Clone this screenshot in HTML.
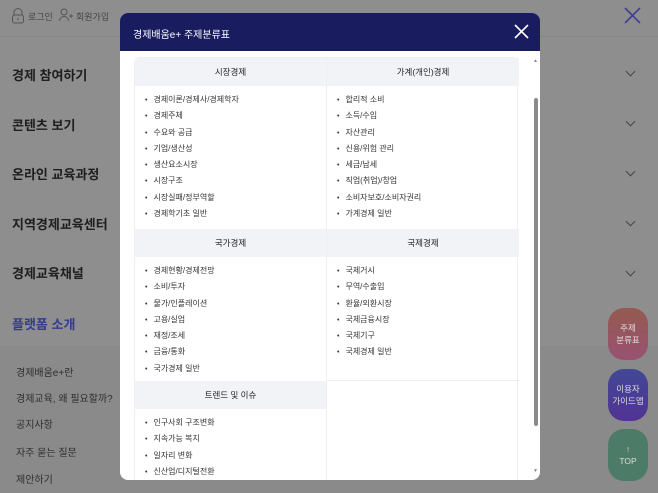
<!DOCTYPE html>
<html><head><meta charset="utf-8"><style>
*{margin:0;padding:0;box-sizing:border-box}
body{width:658px;height:493px;overflow:hidden;background:#8e8e8e;font-family:"Liberation Sans","Noto Sans CJK KR",sans-serif;position:relative;color:#222}
.abs{position:absolute}
.top{left:0;top:0;width:658px;height:37px;border-bottom:1px solid #858585}
.menu{left:12px;font-size:13px;font-weight:bold;color:#1e1e1e}
.chev{left:627px;width:7px;height:7px;border-right:1px solid #444;border-bottom:1px solid #444;transform:rotate(45deg)}
.sub{left:16px;font-size:10px;color:#2e2e2e}
.modal{left:120px;top:13px;width:420px;height:467px;background:#fff;border-radius:8px;overflow:hidden}
.mh{height:38px;background:#191d5f;color:#fff;font-size:10px;padding:13px 0 0 13px;position:relative}
.grid{left:14px;top:44px;width:384px;border:1px solid #eceef2;border-radius:6px}
.cell{position:absolute;width:192px}
.ch{height:28px;background:#f2f3f7;text-align:center;font-size:8.5px;line-height:28px;color:#222}
.cell ul{list-style:none;padding:9px 0 0 10px}
.cell li{font-size:8px;height:16.3px;line-height:10px;color:#333}
.cell li:before{content:"•";margin-right:6px;font-size:7px}
.fb{left:608px;width:40px;height:52px;border-radius:16px;color:#ddd;font-size:8.5px;text-align:center;display:flex;align-items:center;justify-content:center;line-height:12px}
</style></head><body>
<div class="abs top"></div>
<svg class="abs" style="left:11px;top:8px" width="14" height="16" viewBox="0 0 14 16"><path d="M3 7V4.5a4 4 0 0 1 8 0V7" fill="none" stroke="#555" stroke-width="1"/><rect x="1.5" y="7" width="11" height="8" rx="2" fill="none" stroke="#555"/><path d="M7 10v2" stroke="#555"/></svg>
<div class="abs" style="left:28px;top:10px;font-size:9px;color:#444">로그인</div>
<svg class="abs" style="left:59px;top:8px" width="14" height="14" viewBox="0 0 14 14"><circle cx="5" cy="4" r="3" fill="none" stroke="#555"/><path d="M0.5 13a4.5 4.5 0 0 1 9 0" fill="none" stroke="#555"/><path d="M10 8h4M12 6v4" stroke="#555"/></svg>
<div class="abs" style="left:76px;top:10px;font-size:9px;color:#444">회원가입</div>
<svg class="abs" style="left:624px;top:7px" width="17" height="17" viewBox="0 0 17 17"><path d="M1 1L16 16M16 1L1 16" stroke="#3b3f94" stroke-width="1.6"/></svg>

<div class="abs menu" style="top:65px">경제 참여하기</div>
<div class="abs menu" style="top:115px">콘텐츠 보기</div>
<div class="abs menu" style="top:164px">온라인 교육과정</div>
<div class="abs menu" style="top:214px">지역경제교육센터</div>
<div class="abs menu" style="top:263px">경제교육채널</div>
<div class="abs menu" style="top:314px;color:#343a8c">플랫폼 소개</div>
<div class="abs chev" style="top:68px"></div>
<div class="abs chev" style="top:118px"></div>
<div class="abs chev" style="top:168px"></div>
<div class="abs chev" style="top:218px"></div>
<div class="abs chev" style="top:268px"></div>
<div class="abs" style="left:0;top:346px;width:658px;height:147px;background:#8a8a8a"></div>
<div class="abs sub" style="top:364px">경제배움e+란</div>
<div class="abs sub" style="top:390px">경제교육, 왜 필요할까?</div>
<div class="abs sub" style="top:416px">공지사항</div>
<div class="abs sub" style="top:444px">자주 묻는 질문</div>
<div class="abs sub" style="top:471px">제안하기</div>

<div class="abs modal">
<div class="mh">경제배움e+ 주제분류표
<svg class="abs" style="left:394px;top:11px" width="15" height="15" viewBox="0 0 15 15"><path d="M1 1L14 14M14 1L1 14" stroke="#fff" stroke-width="1.6"/></svg></div>
<div class="abs" style="left:414px;top:85px;width:4px;height:328px;background:#8a8a8a;border-radius:2px"></div>
<div class="abs" style="left:413px;top:45px;font-size:5px;color:#888">▲</div>
<div class="abs" style="left:413px;top:455px;font-size:5px;color:#888">▼</div>
<div class="abs grid" style="height:440px">
 <div class="cell" style="left:0;top:0;border-right:1px solid #eceef2;height:171px"><div class="ch">시장경제</div><ul><li>경제이론/경제사/경제학자</li><li>경제주체</li><li>수요와 공급</li><li>기업/생산성</li><li>생산요소시장</li><li>시장구조</li><li>시장실패/정부역할</li><li>경제학기초 일반</li></ul></div>
 <div class="cell" style="left:192px;top:0;height:171px"><div class="ch">가계(개인)경제</div><ul><li>합리적 소비</li><li>소득/수입</li><li>자산관리</li><li>신용/위험 관리</li><li>세금/납세</li><li>직업(취업)/창업</li><li>소비자보호/소비자권리</li><li>가계경제 일반</li></ul></div>
 <div class="cell" style="left:0;top:171px;border-right:1px solid #eceef2;height:152px"><div class="ch">국가경제</div><ul><li>경제현황/경제전망</li><li>소비/투자</li><li>물가/인플레이션</li><li>고용/실업</li><li>재정/조세</li><li>금융/통화</li><li>국가경제 일반</li></ul></div>
 <div class="cell" style="left:192px;top:171px;height:152px;border-bottom:1px solid #eceef2"><div class="ch">국제경제</div><ul><li>국제거시</li><li>무역/수출입</li><li>환율/외환시장</li><li>국제금융시장</li><li>국제기구</li><li>국제경제 일반</li></ul></div>
 <div class="cell" style="left:0;top:323px;border-right:1px solid #eceef2;height:120px"><div class="ch">트렌드 및 이슈</div><ul><li>인구사회 구조변화</li><li>지속가능 복지</li><li>일자리 변화</li><li>신산업/디지털전환</li></ul></div>
</div>
</div>

<div class="abs fb" style="top:308px;background:linear-gradient(#955a50,#985272)">주제<br>분류표</div>
<div class="abs fb" style="top:369px;background:linear-gradient(#414896,#523394)">이용자<br>가이드맵</div>
<div class="abs fb" style="top:429px;background:#4c7b67">↑<br>TOP</div>
</body></html>
